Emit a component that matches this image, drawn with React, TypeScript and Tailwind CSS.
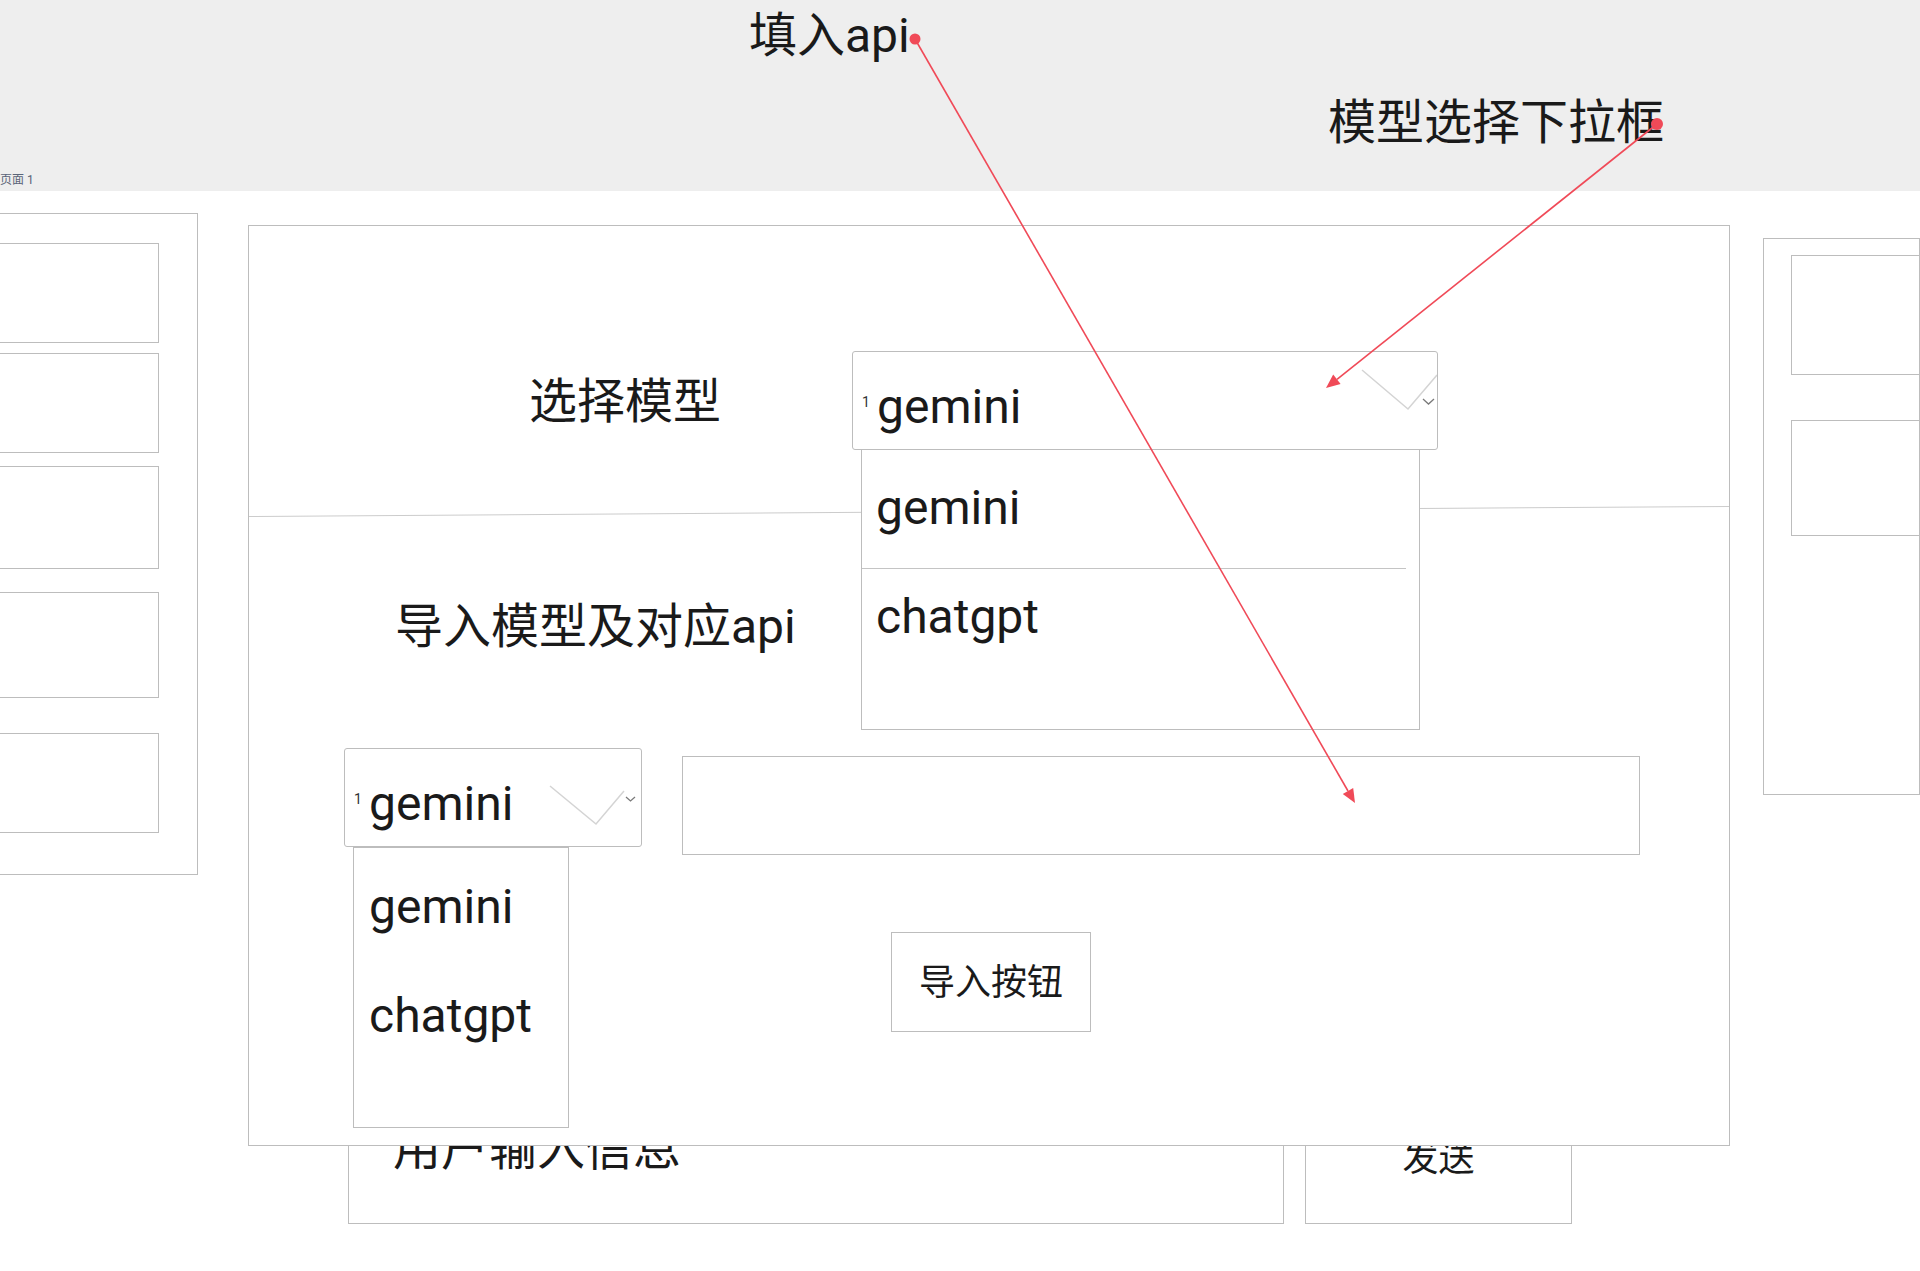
export default function App() {
  const font = { fontFamily: 'Roboto, "Noto Sans CJK SC", sans-serif' }

  return (
    <div className="relative w-full h-[1271px] overflow-hidden bg-white text-[#1a1a1a]" style={font}>
      {/* annotation band */}
      <div className="h-[191px] bg-[#eeeeee] flex flex-col">
        <div className="pl-[749px] pt-[12px] text-[48px] leading-[48px]">填入api</div>
        <div className="pl-[1328px] mt-[39px] text-[48px] leading-[48px]">模型选择下拉框</div>
        <div className="mt-[27px] text-[12px] leading-[12px] text-[#5a6478]">页面 1</div>
      </div>

      <div className="flex items-start">
        {/* left list panel */}
        <div className="-ml-[40px] mt-[22px] w-[238px] h-[662px] border border-[#bdbdbd] flex flex-col items-end pr-[38px]">
          <div className="mt-[29px] w-[190px] h-[100px] border border-[#bdbdbd]" />
          <div className="mt-[10px] w-[190px] h-[100px] border border-[#bdbdbd]" />
          <div className="mt-[13px] w-[190px] h-[103px] border border-[#bdbdbd]" />
          <div className="mt-[23px] w-[190px] h-[106px] border border-[#bdbdbd]" />
          <div className="mt-[35px] w-[190px] h-[100px] border border-[#bdbdbd]" />
        </div>

        {/* center column */}
        <div className="ml-[50px] mt-[34px] flex flex-col">
          <div className="relative z-10 w-[1482px] h-[921px] bg-white border border-[#bdbdbd] flex flex-col">
            {/* model select */}
            <div className="h-[285px] pt-[125px]">
              <div className="flex items-center h-[98px]">
                <div className="ml-[280px] mt-[4px] text-[48px] leading-[48px]">选择模型</div>
                <div className="relative ml-[131px]">
                  <Select width="w-[586px]" v={[509, 18, 555, 57, 584, 23]} c={[570, 47, 575.5, 52, 581, 47]} />
                  <div className="absolute left-[9px] top-[98px] w-[559px] h-[281px] bg-white border border-[#bdbdbd] pt-[34px] z-10">
                    <div className="h-[85px] mr-[13px] pl-[14px] border-b border-[#c4c4c4] text-[48px] leading-[48px]">gemini</div>
                    <div className="pt-[24px] pl-[14px] text-[48px] leading-[48px]">chatgpt</div>
                  </div>
                </div>
              </div>
            </div>

            <div className="h-px bg-[#cccccc] -rotate-[0.39deg]" />

            {/* import model + api */}
            <div className="pt-[91px] ml-[146px] text-[48px] leading-[48px]">导入模型及对应api</div>
            <div className="mt-[97px] flex items-start">
              <div className="relative ml-[95px]">
                <Select width="w-[298px]" v={[205, 37, 251, 75, 279, 42]} c={[281, 48, 285.5, 52, 290, 48]} />
                <div className="absolute left-[9px] top-[99px] w-[216px] h-[281px] bg-white border border-[#bdbdbd] pt-[35px] z-10">
                  <div className="h-[109px] pl-[15px] text-[48px] leading-[48px]">gemini</div>
                  <div className="pl-[15px] text-[48px] leading-[48px]">chatgpt</div>
                </div>
              </div>
              <div className="ml-[40px] mt-[8px] w-[958px] h-[99px] border border-[#bdbdbd]" />
            </div>
            <div className="mt-[77px] ml-[642px] w-[200px] h-[100px] border border-[#bdbdbd] flex items-center justify-center text-[36px] leading-[36px]">
              <span className="mt-[2px]">导入按钮</span>
            </div>
          </div>

          {/* chat input row, partly hidden behind the panel above */}
          <div className="relative z-0 -mt-[52px] ml-[100px] flex gap-[21px] h-[130px]">
            <div className="w-[936px] h-full border border-[#bdbdbd] pt-[30px] pl-[44px] text-[48px] leading-[48px]">用户输入信息</div>
            <div className="w-[267px] h-full border border-[#bdbdbd] flex items-center justify-center text-[36px] leading-[36px]">发送</div>
          </div>
        </div>

        {/* right panel */}
        <div className="ml-[33px] mt-[47px] w-[157px] h-[557px] border border-[#bdbdbd] pl-[27px] flex flex-col">
          <div className="mt-[16px] h-[120px] border-l border-t border-b border-[#bdbdbd]" />
          <div className="mt-[45px] h-[116px] border-l border-t border-b border-[#bdbdbd]" />
        </div>
      </div>

      {/* red annotation arrows */}
      <svg className="absolute inset-0 pointer-events-none z-20" width="1920" height="1271">
        <circle cx="915" cy="39" r="5.5" fill="#f04a58" />
        <line x1="915" y1="39" x2="1348" y2="791" stroke="#f04a58" strokeWidth="1.6" />
        <polygon points="1355,803 1342.8,793.9 1353.2,787.9" fill="#f04a58" />
        <circle cx="1657" cy="124" r="6" fill="#f04a58" />
        <line x1="1657" y1="124" x2="1337" y2="379.3" stroke="#f04a58" strokeWidth="1.6" />
        <polygon points="1326,388 1333.2,374.6 1340.6,384" fill="#f04a58" />
      </svg>
    </div>
  )
}

function Select({ width, v, c }: { width: string; v: number[]; c: number[] }) {
  return (
    <div className={`relative ${width} h-[99px] border border-[#bdbdbd] rounded-[3px] flex items-start pl-[9px] bg-white`}>
      <span className="mt-[43px] w-[15px] text-[14px] leading-[14px] text-[#333]">1</span>
      <span className="mt-[31px] text-[48px] leading-[48px]">gemini</span>
      <svg className="absolute left-0 top-0" width="100%" height="99">
        <polyline points={`${v[0]},${v[1]} ${v[2]},${v[3]} ${v[4]},${v[5]}`} fill="none" stroke="#d4d4d4" strokeWidth="1.5" />
        <polyline points={`${c[0]},${c[1]} ${c[2]},${c[3]} ${c[4]},${c[5]}`} fill="none" stroke="#7a7a7a" strokeWidth="1.3" />
      </svg>
    </div>
  )
}
